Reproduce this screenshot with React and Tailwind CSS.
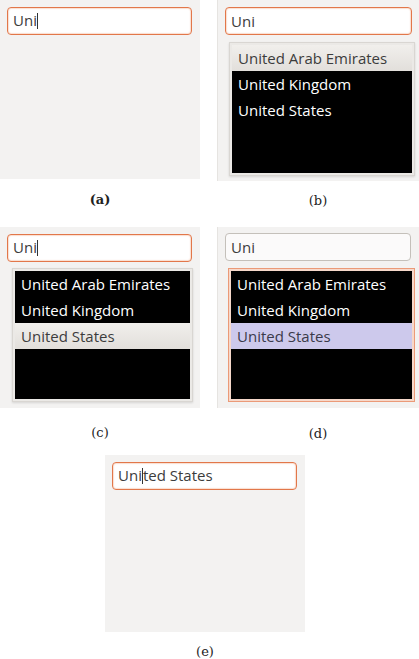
const rows = ["United Arab Emirates", "United Kingdom", "United States"];

function Caret() {
  return <span className="inline-block w-px h-[16px] bg-[#333] align-middle -mt-[2px]" />;
}

function Field({ text, caretAt, focused = true, className = "" }) {
  const base = focused
    ? "border-[#e2774a] bg-white shadow-[inset_0_0_1px_1px_rgba(240,160,120,0.35)]"
    : "border-[#c4c0ba] bg-[#fbfafa]";
  return (
    <div
      className={`h-[28px] rounded-[4px] border-[1.5px] ${base} flex items-center pl-[5px] text-[15px] text-[#3c3c3c] leading-none ${className}`}
    >
      {caretAt == null ? (
        <span>{text}</span>
      ) : (
        <span>
          {text.slice(0, caretAt)}
          <Caret />
          {text.slice(caretAt)}
        </span>
      )}
    </div>
  );
}

function Popup({ active, mode = "grey", className = "" }) {
  const frame =
    mode === "orange"
      ? "border border-[#eb9a78] p-[2px] bg-[#f6d8ca]"
      : "border border-[#d9d6d2] p-[2px] bg-[#ebe9e6] shadow-[0_1px_2px_rgba(0,0,0,0.12)]";
  return (
    <div className={`h-[134px] ${frame} ${className}`}>
      <div className="h-full bg-black">
        {rows.map((r, i) => {
          let cls = "text-white";
          if (i === active) {
            cls =
              mode === "orange"
                ? "bg-[#cdc9ec] text-[#3a3a4a]"
                : "bg-gradient-to-b from-[#f1efec] to-[#e2dfdb] text-[#3c3c3c]";
          }
          return (
            <div key={r} className={`h-[26px] flex items-center pl-[6px] text-[15px] ${cls}`}>
              {r}
            </div>
          );
        })}
      </div>
    </div>
  );
}

function Caption({ children, bold }) {
  return (
    <div
      className={`text-center text-[13px] leading-[12px] text-[#222] ${bold ? "font-bold" : ""}`}
      style={{ fontFamily: '"DejaVu Serif", "Liberation Serif", serif' }}
    >
      {children}
    </div>
  );
}

function Panel({ className = "", children }) {
  return <div className={`bg-[#f3f2f1] ${className}`}>{children}</div>;
}

export default function App() {
  return (
    <div
      className="w-[419px] h-[659px] bg-white overflow-hidden"
      style={{ fontFamily: '"Open Sans", "Noto Sans", sans-serif' }}
    >
      {/* row 1 */}
      <div className="grid grid-cols-[200px_202px] gap-x-[17px] h-[227px]">
        <div>
          <Panel className="h-[179px] pt-[7px] px-[7px]">
            <Field text="Uni" caretAt={3} className="w-[185px]" />
          </Panel>
          <div className="mt-[15px]">
            <Caption bold>(a)</Caption>
          </div>
        </div>
        <div>
          <Panel className="h-[181px] pt-[7px] pl-[7px] border-l border-[#e6e4e1]">
            <Field text="Uni" className="w-[187px]" />
            <Popup active={0} className="mt-[7px] ml-[4px] w-[186px]" />
          </Panel>
          <div className="mt-[14px]">
            <Caption>(b)</Caption>
          </div>
        </div>
      </div>

      {/* row 2 */}
      <div className="grid grid-cols-[200px_202px] gap-x-[17px] h-[228px]">
        <div>
          <Panel className="h-[181px] pt-[7px] px-[7px]">
            <Field text="Uni" caretAt={3} className="w-[185px]" />
            <Popup active={2} className="mt-[6px] ml-[5px] w-[181px]" />
          </Panel>
          <div className="mt-[19px]">
            <Caption>(c)</Caption>
          </div>
        </div>
        <div>
          <Panel className="h-[181px] pt-[6px] pl-[7px] border-l border-[#e6e4e1]">
            <Field text="Uni" focused={false} className="w-[186px]" />
            <Popup active={2} mode="orange" className="mt-[7px] ml-[3px] w-[187px]" />
          </Panel>
          <div className="mt-[20px]">
            <Caption>(d)</Caption>
          </div>
        </div>
      </div>

      {/* row 3 */}
      <div className="ml-[105px] w-[200px]">
        <Panel className="h-[177px] pt-[7px] px-[7px]">
          <Field text="United States" caretAt={3} className="w-[185px]" />
        </Panel>
        <div className="mt-[14px]">
          <Caption>(e)</Caption>
        </div>
      </div>
    </div>
  );
}
